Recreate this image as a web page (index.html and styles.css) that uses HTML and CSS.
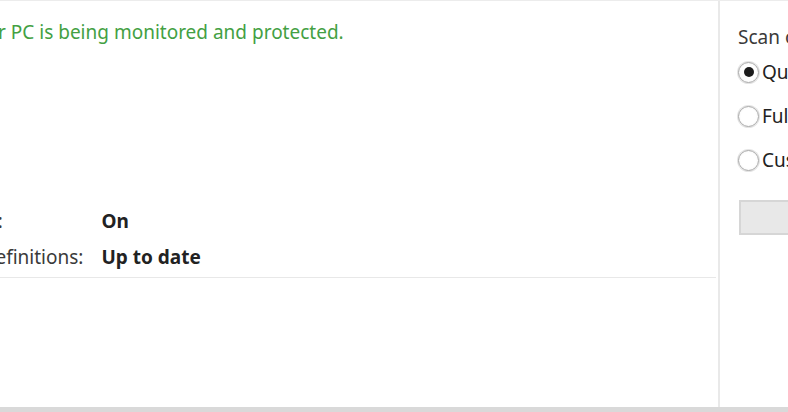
FILE: index.html
```html
<!DOCTYPE html>
<html>
<head>
<meta charset="utf-8">
<link rel="stylesheet" href="styles.css">
</head>
<body>
<div class="window">
  <div class="content">
    <main class="main">
      <div class="main-inner">
        <p class="status">Your PC is being monitored and protected.</p>
        <div class="details">
          <span class="label">Real-time protection:</span><span class="value">On</span>
          <span class="label">Virus and spyware definitions:</span><span class="value">Up to date</span>
        </div>
        <div class="rule"></div>
      </div>
    </main>
    <aside class="side">
      <p class="side-title">Scan options:</p>
      <label class="radio-row"><span class="radio checked"></span><span>Quick</span></label>
      <label class="radio-row"><span class="radio"></span><span>Full</span></label>
      <label class="radio-row"><span class="radio"></span><span>Custom</span></label>
      <button class="scan-btn">Scan now</button>
    </aside>
  </div>
  <div class="bottom-bar"></div>
</div>
</body>
</html>
```
FILE: styles.css
```css
html, body {
  margin: 0;
  padding: 0;
  background: #ffffff;
}
body {
  width: 788px;
  height: 412px;
  overflow: hidden;
  font-family: "Noto Sans", "Open Sans", sans-serif;
  font-size: 19px;
  color: #2b2b2b;
}
.window {
  display: flex;
  flex-direction: column;
  height: 412px;
  border-top: 1px solid #ececec;
  box-sizing: border-box;
}
.content {
  flex: 1;
  display: flex;
  min-height: 0;
}
.main {
  width: 718px;
  flex: none;
  overflow: hidden;
  border-right: 2px solid #e9e9e9;
}
.main-inner {
  margin-left: -184px;
}
.status {
  margin: 20px 0 0;
  padding-left: 149px;
  line-height: 22px;
  color: #43a043;
  white-space: nowrap;
}
.details {
  display: grid;
  grid-template-columns: auto auto;
  justify-content: start;
  column-gap: 18px;
  row-gap: 14px;
  margin-top: 167px;
  line-height: 22px;
  white-space: nowrap;
}
.label {
  color: #3a3a3a;
}
.value {
  font-weight: 700;
  color: #222222;
}
.rule {
  margin-top: 9px;
  border-bottom: 1px solid #e8e8e8;
  margin-right: 2px;
}
.side {
  flex: 1;
  overflow: hidden;
  white-space: nowrap;
  padding-left: 18px;
}
.side-title {
  margin: 25px 0 0;
  line-height: 22px;
  color: #3a3a3a;
}
.radio-row {
  display: flex;
  align-items: center;
  gap: 3px;
  height: 22px;
  margin-top: 22px;
  color: #222222;
}
.side-title + .radio-row {
  margin-top: 13px;
}
.radio {
  width: 21px;
  height: 21px;
  flex: none;
  border-radius: 50%;
  border: 1px solid #a8a8a8;
  box-shadow: 0 0 0 1px #e4e4e4;
  background: radial-gradient(circle, #ffffff 55%, #f0f0f0 100%);
  box-sizing: border-box;
  display: flex;
  align-items: center;
  justify-content: center;
}
.radio.checked::after {
  content: "";
  width: 10px;
  height: 10px;
  border-radius: 50%;
  background: #1c1c1c;
}
.scan-btn {
  display: block;
  margin-top: 29px;
  margin-left: 1px;
  width: 210px;
  height: 35px;
  background: #e8e8e8;
  border: 2px solid #d6d6d6;
  font-family: inherit;
  font-size: 19px;
  color: #222222;
}
.bottom-bar {
  height: 5px;
  flex: none;
  background: #d9d9d9;
}
```
